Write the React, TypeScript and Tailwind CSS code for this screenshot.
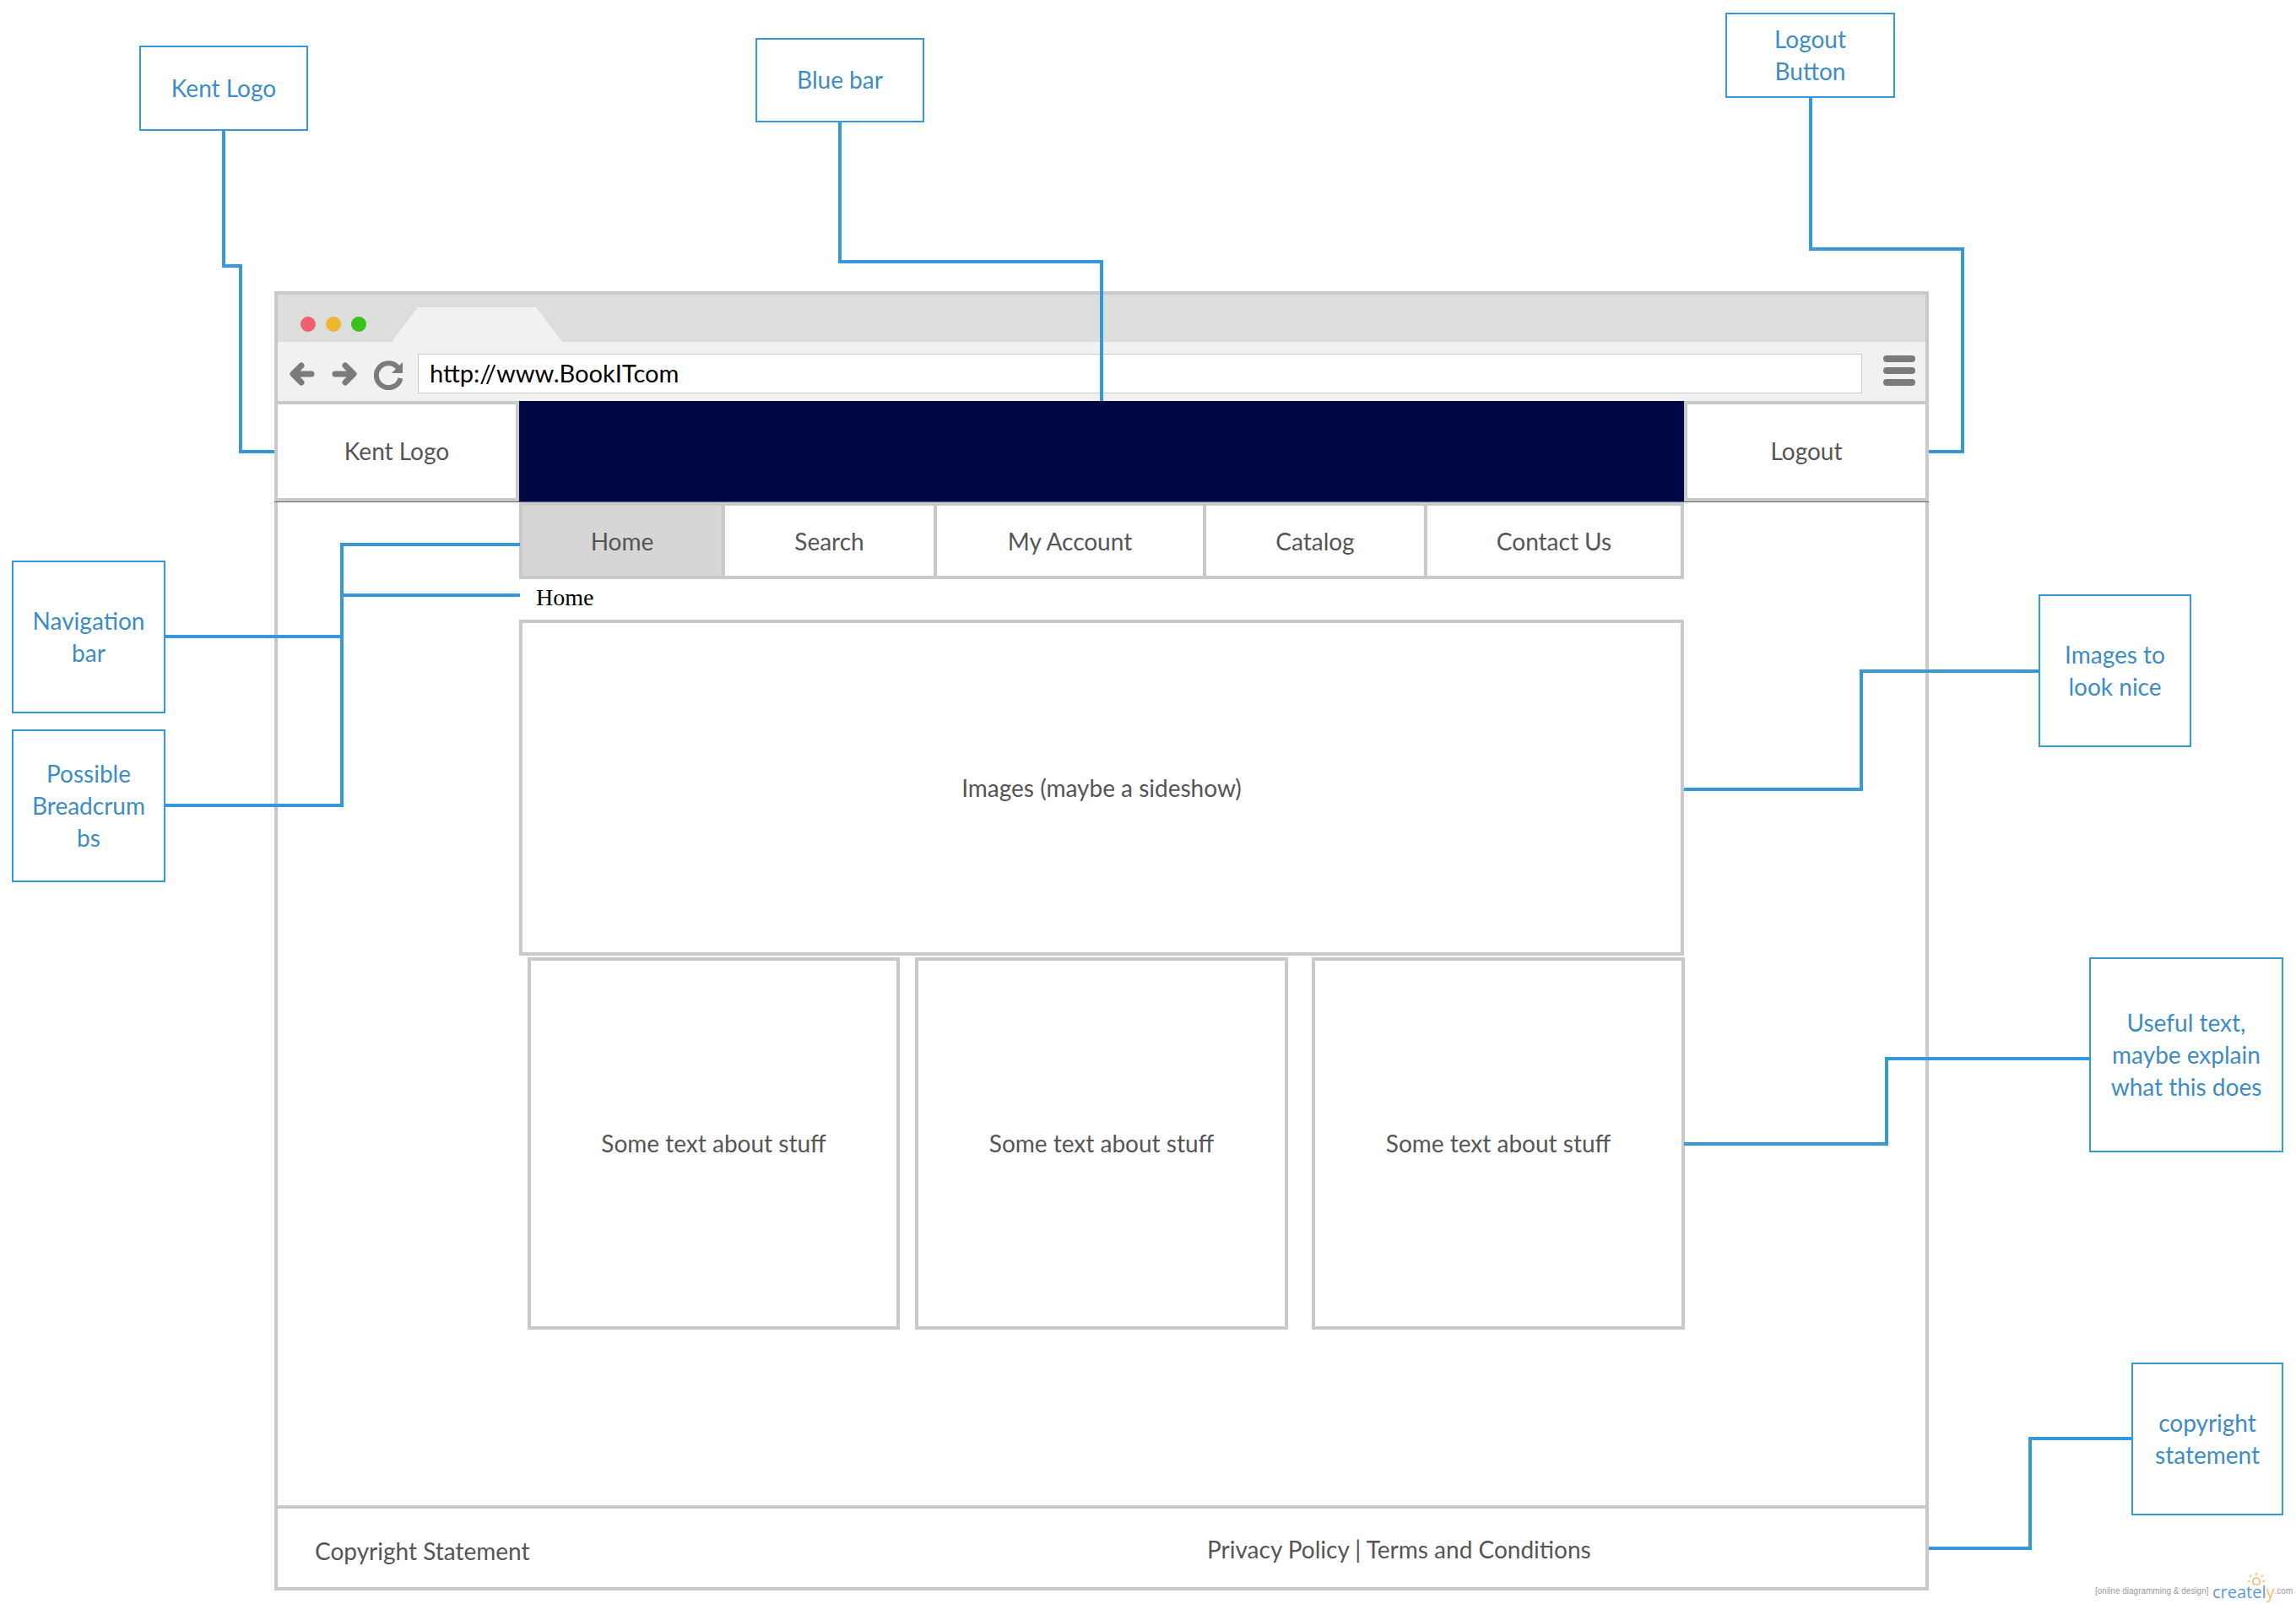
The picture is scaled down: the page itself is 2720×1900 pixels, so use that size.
import type { ReactNode } from 'react'

const connectors = [
  'M265 155V315H285V535H325',
  'M995 145V310H1305V475',
  'M2145 115V295H2325V535H2285',
  'M195 754H405',
  'M195 954H405V645H616',
  'M405 705H616',
  'M1995 935H2205V795H2415',
  'M1995 1355H2235V1254H2475',
  'M2285 1834H2405V1704H2525',
]

const tabs = [
  { label: 'Home', active: true },
  { label: 'Search' },
  { label: 'My Account' },
  { label: 'Catalog' },
  { label: 'Contact Us' },
]

function Note({ className, children }: { className: string; children: ReactNode }) {
  return (
    <div
      className={`absolute flex items-center justify-center border-2 border-[#3498db] text-center text-[28px] leading-[38px] text-[#3d8cc4] ${className}`}
    >
      <p className="pb-[2px]">{children}</p>
    </div>
  )
}

function Card({ className }: { className: string }) {
  return (
    <div className={`flex h-[441px] items-center justify-center border-4 border-[#c9c9c9] pb-[2px] text-[28px] text-[#555555] ${className}`}>
      Some text about stuff
    </div>
  )
}

function BrowserChrome() {
  return (
    <div className="border-x-4 border-t-4 border-[#c9c9c9]">
      <div className="relative flex h-[56px] items-center gap-[12px] bg-[#dcdedc] pl-[27px]">
        <span className="mt-[14px] h-[18px] w-[18px] rounded-full bg-[#ef5f72]" />
        <span className="mt-[14px] h-[18px] w-[18px] rounded-full bg-[#eeb72f]" />
        <span className="mt-[14px] h-[18px] w-[18px] rounded-full bg-[#3abf1c]" />
        <svg className="absolute bottom-0 left-[135px]" width="202" height="41" viewBox="0 0 202 41">
          <path d="M0 41L31 0H171L202 41Z" fill="#f1f1f1" />
        </svg>
      </div>
      <div className="flex h-[70px] items-start bg-[#f1f1f1] pt-[14px]">
        <svg className="ml-[14px] mt-[10px]" width="30" height="28" viewBox="0 0 30 28" fill="none" stroke="#7b7b7b" strokeWidth="7" strokeLinecap="round" strokeLinejoin="round">
          <path d="M26 14H6M14 4L4 14L14 24" />
        </svg>
        <svg className="ml-[20px] mt-[10px]" width="30" height="28" viewBox="0 0 30 28" fill="none" stroke="#7b7b7b" strokeWidth="7" strokeLinecap="round" strokeLinejoin="round">
          <path d="M4 14H24M16 4L26 14L16 24" />
        </svg>
        <svg className="ml-[20px] mt-[7px]" width="36" height="36" viewBox="0 0 36 36" fill="none">
          <path d="M29 10A14.500 14.500 0 1 0 31.500 22" stroke="#7b7b7b" strokeWidth="6" />
          <path d="M34 3V16H21Z" fill="#7b7b7b" />
        </svg>
        <div className="ml-[16px] flex h-[47px] w-[1711px] items-center border border-[#cccccc] bg-white pb-[2px] pl-[13px] text-[29px] text-black">
          http://www.BookITcom
        </div>
        <div className="ml-[25px] mt-[2px] flex w-[38px] flex-col gap-[6px]">
          <span className="h-[8px] rounded-full bg-[#7b7b7b]" />
          <span className="h-[8px] rounded-full bg-[#7b7b7b]" />
          <span className="h-[8px] rounded-full bg-[#7b7b7b]" />
        </div>
      </div>
    </div>
  )
}

function Creately() {
  return (
    <div className="absolute bottom-[4px] left-[2482px] flex items-end whitespace-nowrap">
      <span className="mb-[5px] w-[139px] font-['Liberation_Sans',sans-serif] text-[10px] leading-[12px] text-[#999999]">
        [online diagramming &amp; design]
      </span>
      <span className="relative font-['Open_Sans',sans-serif] text-[20px] leading-[20px] text-[#5b9bd5]">
        createl
        <span className="text-[#f5bd6c]">y</span>
        <svg className="absolute -top-[13px] left-[42px]" width="20" height="20" viewBox="0 0 20 20" fill="none" stroke="#f5bd6c" strokeWidth="1.500">
          <path d="M10 6a4.500 4.500 0 0 0-2.500 8h5A4.500 4.500 0 0 0 10 6ZM10 0v3M2 3l2 2M18 3l-2 2M0 10h3M17 10h3" />
        </svg>
      </span>
      <span className="mb-[5px] font-['Liberation_Sans',sans-serif] text-[10px] leading-[12px] text-[#999999]">.com</span>
    </div>
  )
}

export default function App() {
  return (
    <div className="relative h-[1900px] w-[2720px] overflow-hidden bg-white font-['Lato',sans-serif]">
      <div className="absolute left-[325px] top-[345px] flex h-[1539px] w-[1960px] flex-col">
        <BrowserChrome />

        <div className="grid h-[120px] grid-cols-[290px_1380px_290px] border-b border-[#5a6478] text-[28px] text-[#555555]">
          <div className="flex items-center justify-center border-4 border-[#c9c9c9] bg-white pb-[2px]">Kent Logo</div>
          <div className="bg-[#000844]" />
          <div className="flex items-center justify-center border-4 border-[#c9c9c9] bg-white pb-[2px]">Logout</div>
        </div>

        <div className="flex-1 border-x-4 border-[#c9c9c9] pl-[286px]">
          <div className="w-[1380px]">
            <nav className="grid h-[91px] grid-cols-[236px_251px_319px_262px_1fr] border-4 border-[#c9c9c9] text-[28px] text-[#555555]">
              {tabs.map((tab) => (
                <div
                  key={tab.label}
                  className={tab.active ? 'flex items-center justify-center bg-[#d6d6d6]' : 'flex items-center justify-center border-l-4 border-[#c9c9c9]'}
                >
                  {tab.label}
                </div>
              ))}
            </nav>
            <div className="flex h-[48px] items-center pb-[4px] pl-[20px] font-['Liberation_Serif',serif] text-[28px] text-black">Home</div>
            <div className="flex h-[398px] items-center justify-center border-4 border-[#c9c9c9] text-[28px] text-[#555555]">
              Images (maybe a sideshow)
            </div>
            <div className="mt-[2px] flex w-[1381px] pl-[10px]">
              <Card className="w-[441px]" />
              <Card className="ml-[18px] w-[442px]" />
              <Card className="ml-[28px] w-[442px]" />
            </div>
          </div>
        </div>

        <footer className="flex h-[101px] items-center border-4 border-[#c9c9c9] pl-[44px] text-[28px] text-[#555555]">
          <span className="mt-[6px] w-[1057px]">Copyright Statement</span>
          <span className="mt-[3px]">Privacy Policy | Terms and Conditions</span>
        </footer>
      </div>

      <svg className="absolute inset-0" width="2720" height="1900" viewBox="0 0 2720 1900" fill="none" stroke="#3498db" strokeWidth="4">
        {connectors.map((d) => (
          <path key={d} d={d} />
        ))}
      </svg>

      <Note className="left-[165px] top-[54px] h-[101px] w-[200px]">Kent Logo</Note>
      <Note className="left-[895px] top-[45px] h-[100px] w-[200px]">Blue bar</Note>
      <Note className="left-[2044px] top-[15px] h-[101px] w-[201px]">
        Logout
        <br />
        Button
      </Note>
      <Note className="left-[14px] top-[664px] h-[181px] w-[182px]">
        Navigation
        <br />
        bar
      </Note>
      <Note className="left-[14px] top-[864px] h-[181px] w-[182px]">
        Possible
        <br />
        Breadcrum
        <br />
        bs
      </Note>
      <Note className="left-[2415px] top-[704px] h-[181px] w-[181px]">
        Images to
        <br />
        look nice
      </Note>
      <Note className="left-[2475px] top-[1134px] h-[231px] w-[230px]">
        Useful text,
        <br />
        maybe explain
        <br />
        what this does
      </Note>
      <Note className="left-[2525px] top-[1614px] h-[181px] w-[180px]">
        copyright
        <br />
        statement
      </Note>

      <Creately />
    </div>
  )
}
